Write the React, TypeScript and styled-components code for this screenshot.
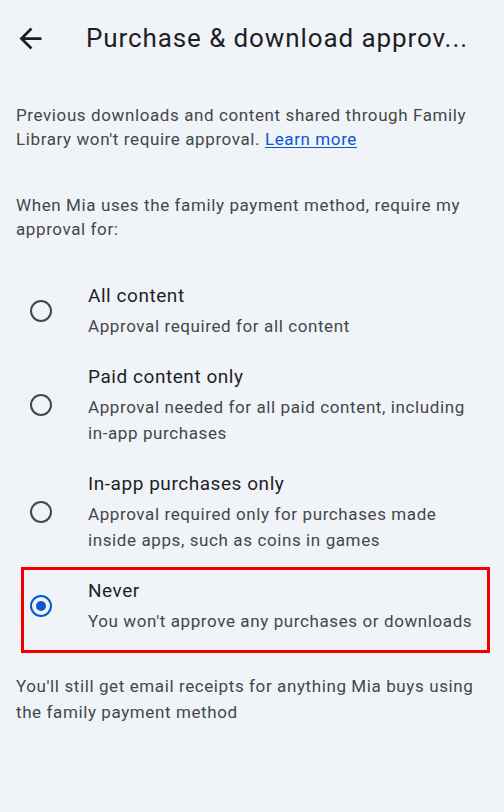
import React from "react";
import styled, { createGlobalStyle } from "styled-components";

const GlobalStyle = createGlobalStyle`
  html, body {
    margin: 0;
    padding: 0;
    background: #f0f4f9;
  }
  body {
    font-family: Roboto, "Noto Sans", Arial, sans-serif;
    -webkit-font-smoothing: antialiased;
  }
`;

const Page = styled.div`
  min-height: 812px;
  background: #f0f4f9;
  color: #1f1f1f;
`;

const TopBar = styled.div`
  display: flex;
  align-items: center;
  height: 33px;
  padding: 22px 16px 0 14px;
`;

const BackButton = styled.button`
  display: flex;
  align-items: center;
  justify-content: center;
  width: 33px;
  height: 33px;
  padding: 0;
  border: none;
  background: transparent;
  color: #1f1f1f;
  cursor: pointer;
`;

const Title = styled.h1`
  flex: 1;
  min-width: 0;
  margin: 0 0 0 39px;
  font-size: 26px;
  font-weight: 400;
  letter-spacing: 0.9px;
  line-height: 33px;
  color: #1f1f1f;
  white-space: nowrap;
  overflow: hidden;
  text-overflow: ellipsis;
`;

const Text = styled.p<{ $top: number; $lh?: number }>`
  margin: ${(p) => p.$top}px 0 0;
  padding: 0 16px;
  font-size: 17px;
  letter-spacing: 0.6px;
  line-height: ${(p) => p.$lh ?? 24}px;
  color: #444746;
`;

const Link = styled.a`
  color: #0b57d0;
  text-decoration: underline;
  text-underline-offset: 2px;
`;

const OptionList = styled.div`
  margin-top: 30px;
  display: flex;
  flex-direction: column;
`;

const OptionRow = styled.label<{ $marked?: boolean }>`
  position: relative;
  display: flex;
  align-items: center;
  gap: 36px;
  padding: 12px 16px 13px 30px;
  cursor: pointer;

  ${(p) =>
    p.$marked &&
    `
    &::after {
      content: "";
      position: absolute;
      top: 1px;
      bottom: -6px;
      left: 21px;
      right: 14px;
      border: 3px solid #f20000;
      pointer-events: none;
    }
  `}
`;

const Radio = styled.span<{ $checked: boolean }>`
  flex: none;
  box-sizing: border-box;
  width: 22px;
  height: 22px;
  border-radius: 50%;
  border: 2px solid ${(p) => (p.$checked ? "#0b57d0" : "#444746")};
  display: flex;
  align-items: center;
  justify-content: center;

  &::before {
    content: "";
    width: 10px;
    height: 10px;
    border-radius: 50%;
    background: ${(p) => (p.$checked ? "#0b57d0" : "transparent")};
  }
`;

const OptionText = styled.div`
  display: flex;
  flex-direction: column;
`;

const OptionTitle = styled.span`
  font-size: 19px;
  letter-spacing: 0.55px;
  line-height: 26px;
  color: #1f1f1f;
`;

const OptionSub = styled.span`
  margin-top: 4px;
  font-size: 17px;
  letter-spacing: 0.6px;
  line-height: 26px;
  color: #444746;
`;

const ArrowBack = () => (
  <svg width="33" height="33" viewBox="0 0 24 24" fill="currentColor">
    <path d="M20 11H7.83l5.59-5.59L12 4l-8 8 8 8 1.41-1.41L7.83 13H20v-2z" />
  </svg>
);

const options = [
  { title: "All content", sub: "Approval required for all content" },
  {
    title: "Paid content only",
    sub: "Approval needed for all paid content, including in-app purchases",
  },
  {
    title: "In-app purchases only",
    sub: "Approval required only for purchases made inside apps, such as coins in games",
  },
  { title: "Never", sub: "You won't approve any purchases or downloads" },
];

const App = () => {
  const [selected, setSelected] = React.useState(3);

  return (
    <Page>
      <GlobalStyle />
      <TopBar>
        <BackButton aria-label="Back">
          <ArrowBack />
        </BackButton>
        <Title>Purchase &amp; download approv...</Title>
      </TopBar>

      <Text $top={48}>
        Previous downloads and content shared through Family Library won't
        require approval. <Link href="#">Learn more</Link>
      </Text>

      <Text $top={42}>
        When Mia uses the family payment method, require my approval for:
      </Text>

      <OptionList>
        {options.map((o, i) => (
          <OptionRow key={o.title} $marked={i === 3} onClick={() => setSelected(i)}>
            <Radio $checked={selected === i} />
            <OptionText>
              <OptionTitle>{o.title}</OptionTitle>
              <OptionSub>{o.sub}</OptionSub>
            </OptionText>
          </OptionRow>
        ))}
      </OptionList>

      <Text $top={26} $lh={26}>
        You'll still get email receipts for anything Mia buys using the family
        payment method
      </Text>
    </Page>
  );
};

export default App;
